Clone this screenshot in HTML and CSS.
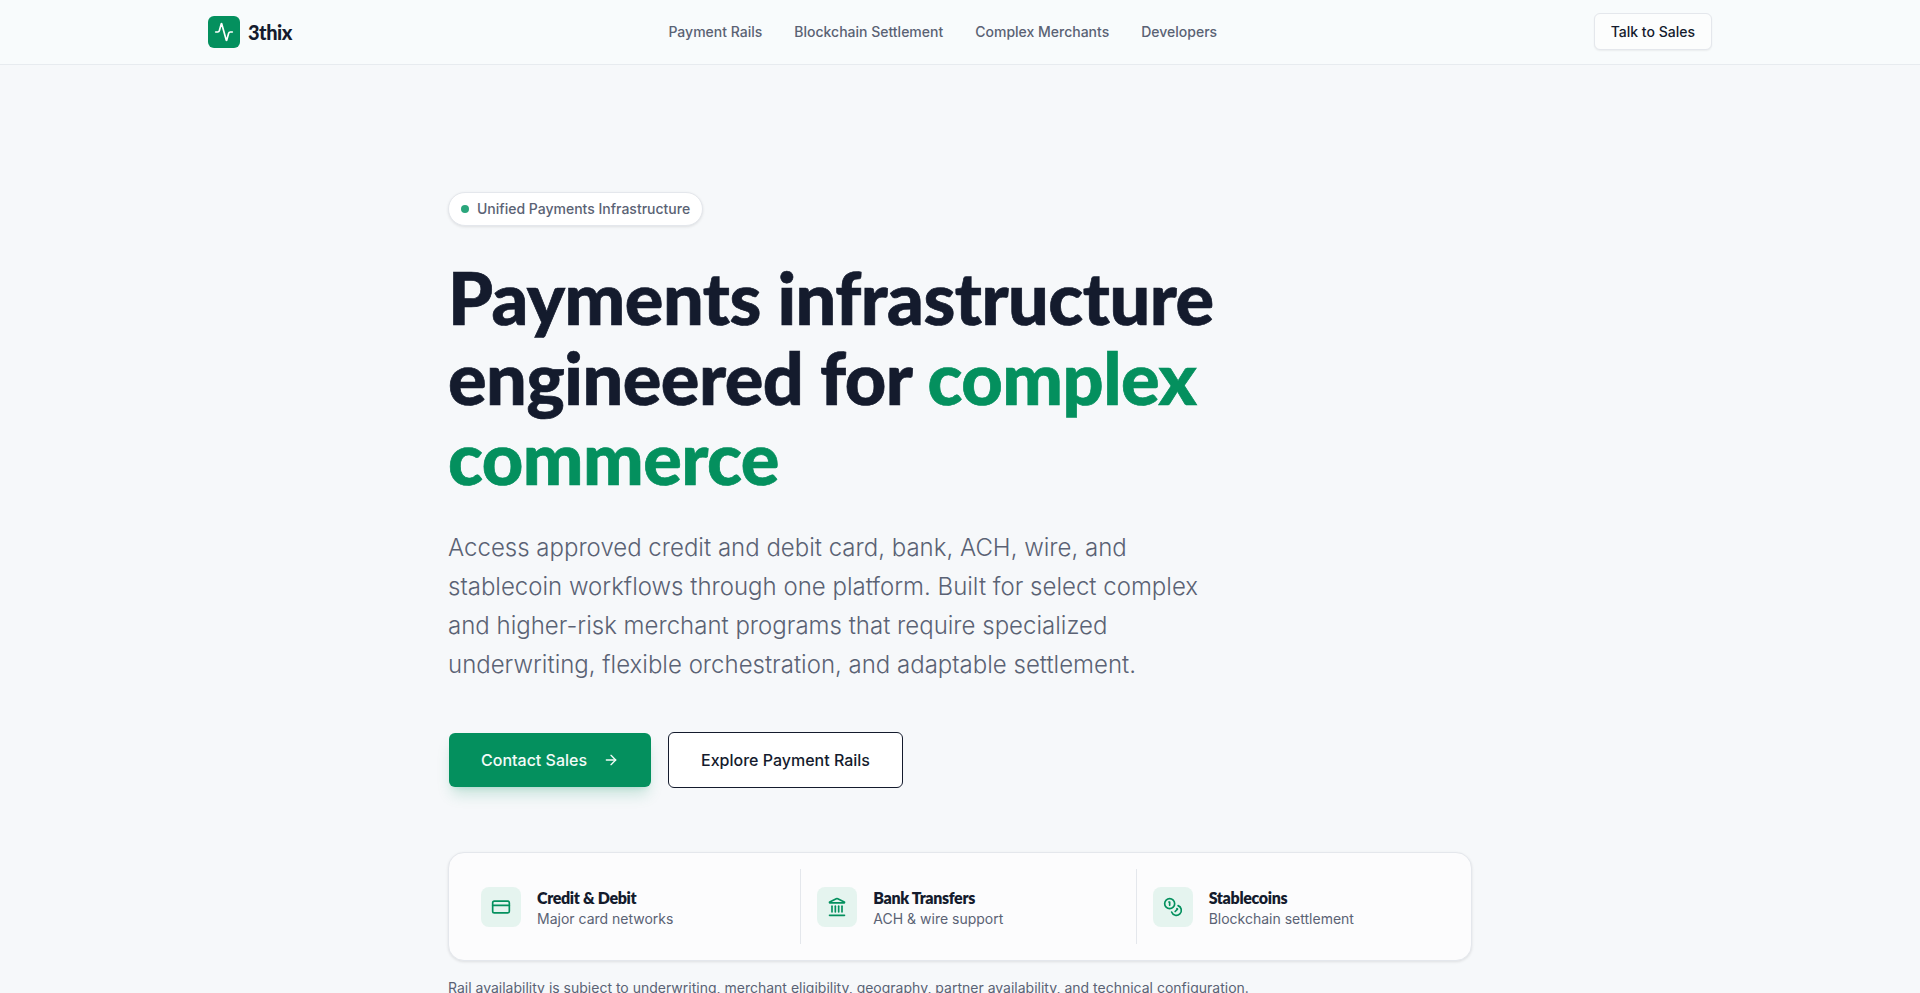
FILE: index.html
```html
<!DOCTYPE html>
<html lang="en">
<head>
<meta charset="utf-8">
<title>3thix</title>
<link rel="stylesheet" href="styles.css">
</head>
<body>
<header class="nav">
  <div class="nav-inner">
    <a class="brand">
      <span class="brand-mark">
        <svg viewBox="0 0 24 24" width="20" height="20" fill="none" stroke="#fff" stroke-width="2" stroke-linecap="round" stroke-linejoin="round"><path d="M22 12h-2.48a2 2 0 0 0-1.93 1.46l-2.35 8.36a.25.25 0 0 1-.48 0L9.24 2.18a.25.25 0 0 0-.48 0l-2.35 8.36A2 2 0 0 1 4.49 12H2"/></svg>
      </span>
      <span class="brand-name">3thix</span>
    </a>
    <nav class="links">
      <a>Payment Rails</a>
      <a>Blockchain Settlement</a>
      <a>Complex Merchants</a>
      <a>Developers</a>
    </nav>
    <a class="talk">Talk to Sales</a>
  </div>
</header>
<main class="hero">
  <div class="pill"><span class="dot"></span>Unified Payments Infrastructure</div>
  <h1>Payments infrastructure engineered for <span class="accent">complex commerce</span></h1>
  <p class="lead">Access approved credit and debit card, bank, ACH, wire, and stablecoin workflows through one platform. Built for select complex and higher-risk merchant programs that require specialized underwriting, flexible orchestration, and adaptable settlement.</p>
  <div class="actions">
    <a class="btn primary">Contact Sales
      <svg viewBox="0 0 24 24" width="16" height="16" fill="none" stroke="currentColor" stroke-width="2" stroke-linecap="round" stroke-linejoin="round"><path d="M5 12h14"/><path d="m12 5 7 7-7 7"/></svg>
    </a>
    <a class="btn outline">Explore Payment Rails</a>
  </div>
  <section class="rails">
    <div class="rail">
      <span class="rail-icon"><svg viewBox="0 0 24 24" width="20" height="20" fill="none" stroke="currentColor" stroke-width="2" stroke-linecap="round" stroke-linejoin="round"><rect width="20" height="14" x="2" y="5" rx="2"/><path d="M2 10h20"/></svg></span>
      <div class="rail-text"><div class="rail-title">Credit &amp; Debit</div><div class="rail-sub">Major card networks</div></div>
    </div>
    <div class="rail">
      <span class="rail-icon"><svg viewBox="0 0 24 24" width="20" height="20" fill="none" stroke="currentColor" stroke-width="2" stroke-linecap="round" stroke-linejoin="round"><path d="M10 18v-7"/><path d="M11.12 2.198a2 2 0 0 1 1.76.006l7.866 3.847c.476.233.31.949-.22.949H3.474c-.53 0-.695-.716-.22-.949z"/><path d="M14 18v-7"/><path d="M18 18v-7"/><path d="M3 22h18"/><path d="M6 18v-7"/></svg></span>
      <div class="rail-text"><div class="rail-title">Bank Transfers</div><div class="rail-sub">ACH &amp; wire support</div></div>
    </div>
    <div class="rail">
      <span class="rail-icon"><svg viewBox="0 0 24 24" width="20" height="20" fill="none" stroke="currentColor" stroke-width="2" stroke-linecap="round" stroke-linejoin="round"><circle cx="8" cy="8" r="6"/><path d="M18.09 10.37A6 6 0 1 1 10.34 18"/><path d="M7 6h1v4"/><path d="m16.71 13.88.7.71-2.82 2.82"/></svg></span>
      <div class="rail-text"><div class="rail-title">Stablecoins</div><div class="rail-sub">Blockchain settlement</div></div>
    </div>
  </section>
  <p class="note">Rail availability is subject to underwriting, merchant eligibility, geography, partner availability, and technical configuration.</p>
</main>
</body>
</html>
```
FILE: styles.css
```css
* { box-sizing: border-box; }
html, body { margin: 0; height: 100%; overflow: hidden; }
body { background: #f6f8fa; color: #141b2d; font-family: Inter, "Liberation Sans", sans-serif; }
a { text-decoration: none; color: inherit; }

.nav { height: 65px; background: #f8fbfc; border-bottom: 1px solid #e7ebef; }
.nav-inner { max-width: 1504px; height: 63px; margin: 0 auto; display: flex; align-items: center; justify-content: space-between; }
.brand { display: flex; align-items: center; gap: 8px; margin-top: 1px; }
.brand-mark { width: 32px; height: 32px; border-radius: 6px; background: #04905e; display: flex; align-items: center; justify-content: center; }
.brand-name { font-family: Lato, sans-serif; font-weight: 900; font-size: 20px; letter-spacing: -0.5px; color: #141b2d; }
.links { display: flex; gap: 32px; font-size: 14px; font-weight: 500; color: #5a6274; }
.talk { height: 37px; padding: 0 16px; display: flex; align-items: center; font-size: 14px; font-weight: 500; color: #141b2d; background: #fcfdfd; border: 1px solid #e4e7ec; border-radius: 6px; box-shadow: 0 1px 2px rgba(0,0,0,.06); }

.hero { width: 1024px; margin: 0 auto; padding-top: 127px; }
.pill { display: inline-flex; align-items: center; gap: 8px; height: 34px; padding: 0 12px 2px; background: #fff; border: 1px solid #e4e7ec; border-radius: 17px; font-size: 14px; font-weight: 500; color: #5a6274; box-shadow: 0 1px 3px rgba(0,0,0,.1); vertical-align: top; }
.dot { width: 8px; height: 8px; border-radius: 50%; background: #2ba67c; margin-top: 2px; }
h1 { margin: 31px 0 0; max-width: 896px; font-family: Lato, sans-serif; font-weight: 900; font-size: 72px; line-height: 80px; letter-spacing: -0.5px; color: #141b2d; -webkit-text-stroke: 0.7px currentColor; }
.accent { color: #04905e; }
.lead { margin: 31px 0 0; max-width: 768px; font-size: 24px; line-height: 39px; font-weight: 300; color: #5a6274; }
.actions { display: flex; gap: 16px; margin-top: 48px; align-items: center; }
.btn { height: 56px; display: flex; align-items: center; font-size: 16px; font-weight: 500; border-radius: 6px; }
.primary { gap: 16px; height: 54px; margin: 0 1px; padding: 0 32px; background: #04905e; color: #f3fbf8; box-shadow: 0 10px 15px -3px rgba(6,144,95,.2), 0 4px 6px -4px rgba(6,144,95,.2); }
.outline { padding: 0 32px; background: #fff; border: 1px solid #141b2d; color: #141b2d; }
.rails { margin-top: 64px; height: 109px; display: grid; grid-template-columns: repeat(3, 1fr); gap: 16px; padding: 16px; background: #fcfcfd; border: 1px solid #e4e7ec; border-radius: 16px; box-shadow: 0 1px 3px rgba(0,0,0,.1); }
.rail { display: flex; align-items: center; gap: 16px; padding: 0 16px; border-left: 1px solid #e4e7ec; }
.rail:first-child { border-left: 0; }
.rail-icon { width: 40px; height: 40px; border-radius: 8px; background: #e5f4ef; color: #04905e; display: flex; align-items: center; justify-content: center; flex: none; }
.rail-text { padding-top: 2px; }
.rail-title { font-family: Lato, sans-serif; font-weight: 800; font-size: 16px; line-height: 21px; letter-spacing: -0.35px; color: #141b2d; }
.rail-sub { font-size: 14px; line-height: 21px; color: #5a6274; }
.note { margin: 17px 0 0; font-size: 14px; line-height: 20px; color: #5a6274; }
```
